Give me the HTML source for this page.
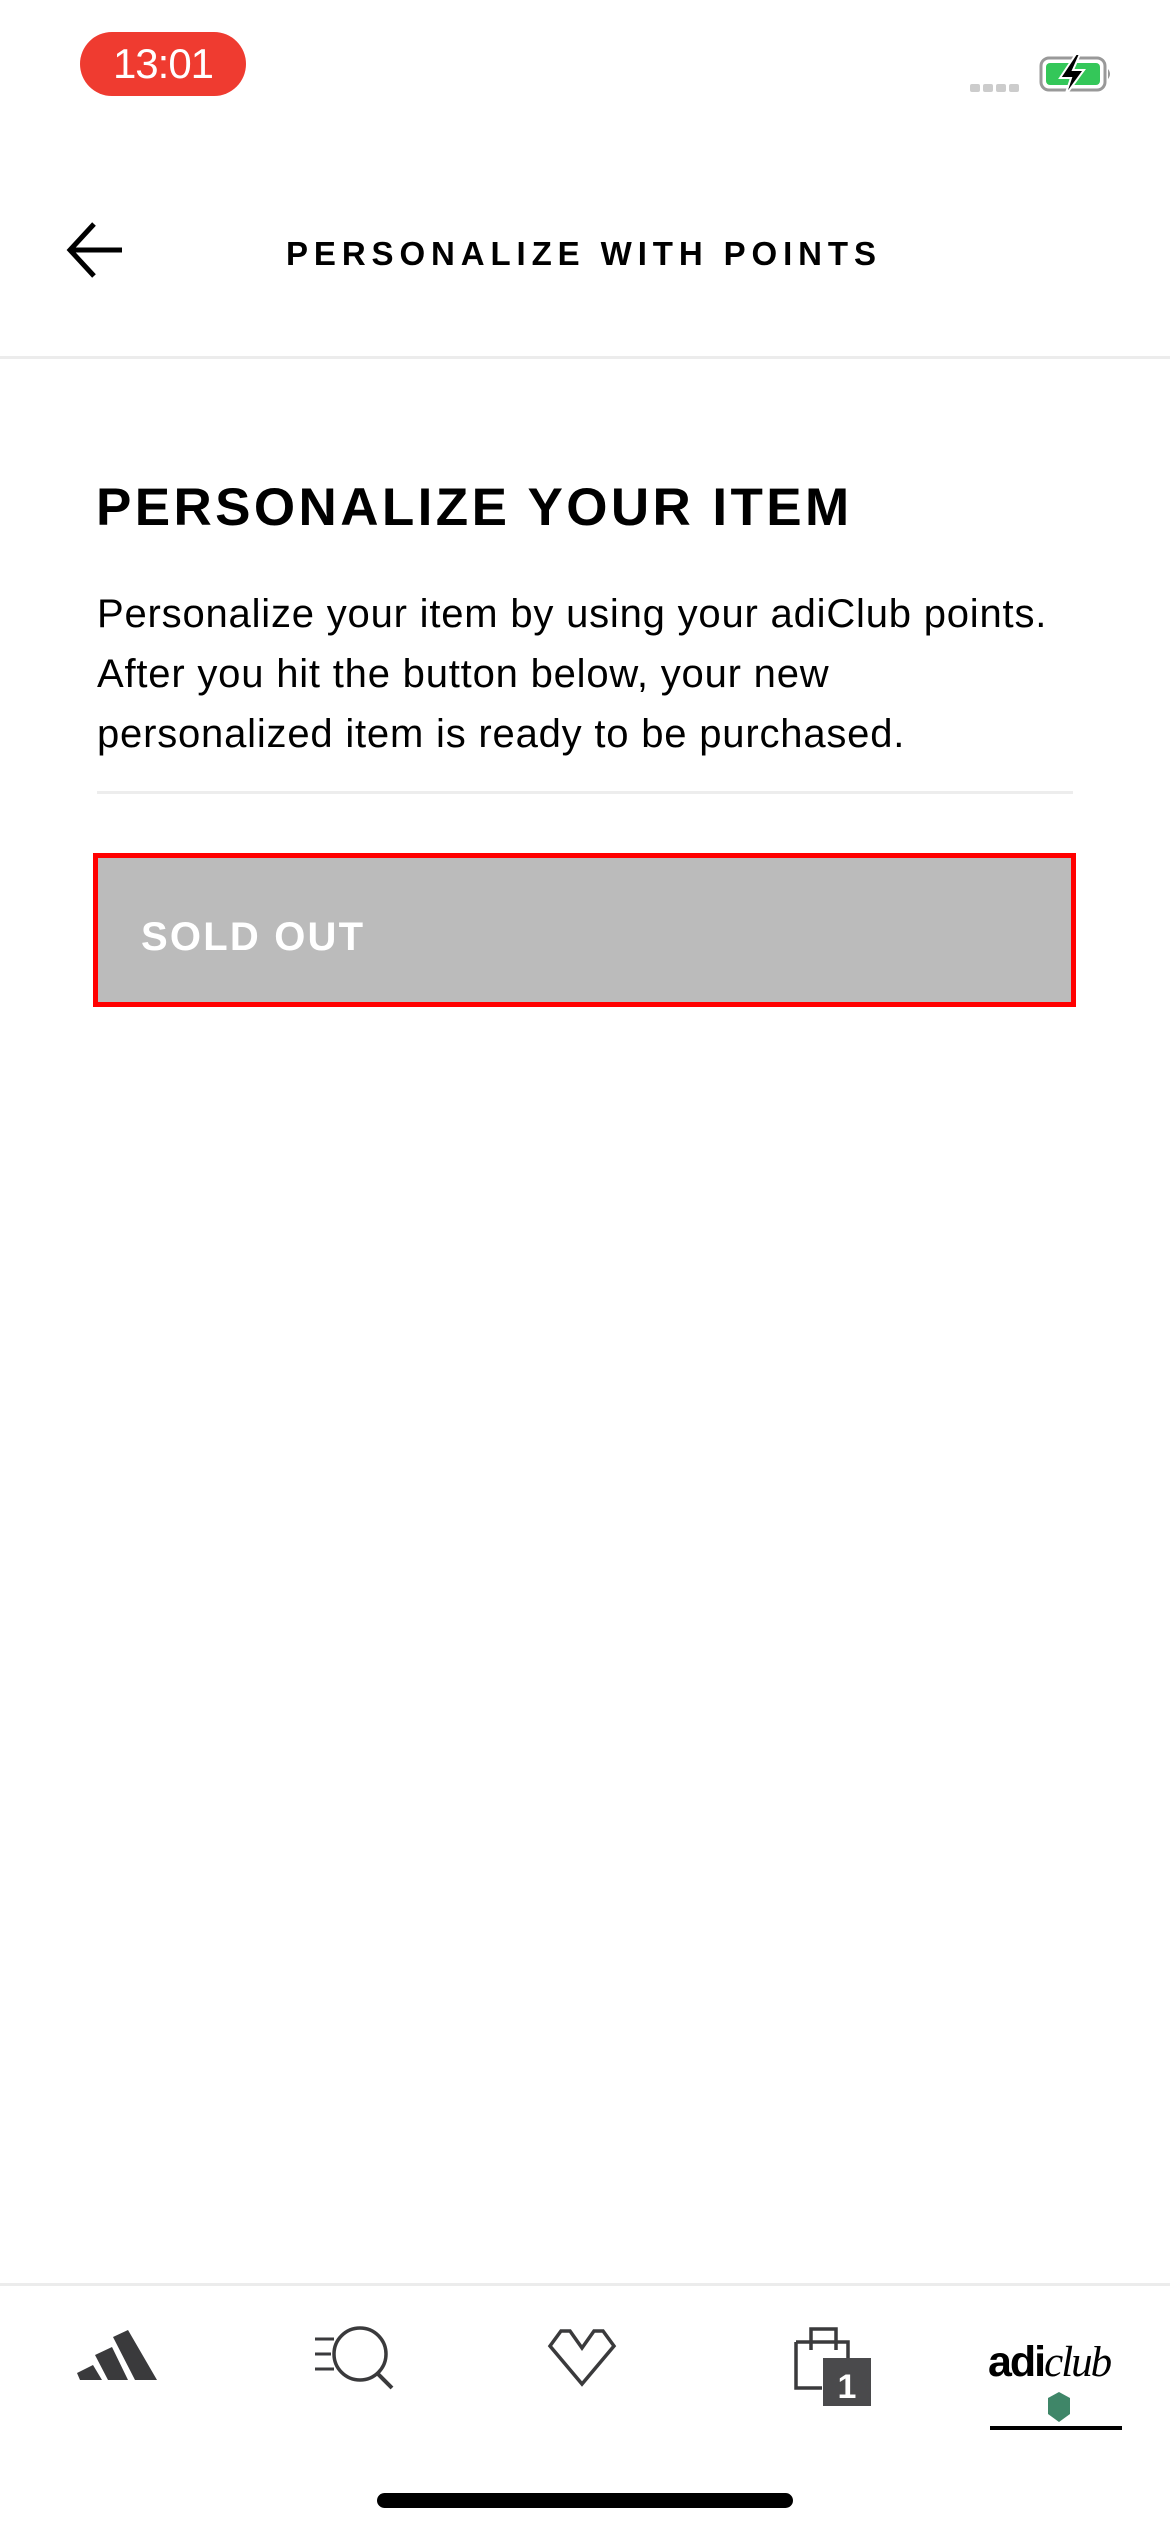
<!DOCTYPE html>
<html><head><meta charset="utf-8"><style>
*{margin:0;padding:0;box-sizing:border-box}
body{width:1170px;height:2532px;background:#fff;position:relative;overflow:hidden;font-family:"Liberation Sans",sans-serif;color:#000}
.a{position:absolute}
</style></head><body>
<div class="a" style="left:80px;top:32px;width:166px;height:64px;border-radius:32px;background:#ef3b30;color:#fff;font-size:42px;line-height:64px;text-align:center;letter-spacing:-1px">13:01</div>
<div class="a" style="left:970px;top:84px;width:10px;height:8px;border-radius:2px;background:#ccc"></div>
<div class="a" style="left:983px;top:84px;width:10px;height:8px;border-radius:2px;background:#ccc"></div>
<div class="a" style="left:996px;top:84px;width:10px;height:8px;border-radius:2px;background:#ccc"></div>
<div class="a" style="left:1009px;top:84px;width:10px;height:8px;border-radius:2px;background:#ccc"></div>
<svg class="a" style="left:1038px;top:54px" width="80" height="42" viewBox="0 0 80 42">
<rect x="3" y="4" width="64" height="32" rx="8" fill="none" stroke="#999" stroke-width="3"/>
<rect x="8" y="9" width="54" height="22" rx="4" fill="#34c759"/>
<path d="M70 15 q4 5 0 10z" fill="#999"/>
<path d="M38 0 L22 24 L33 24 L27 42 L46 16 L35 16 L42 0Z" fill="#000" stroke="#fff" stroke-width="2"/>
</svg>
<svg class="a" style="left:66px;top:222px" width="60" height="56" viewBox="0 0 60 56">
<path d="M28 2 L4 28 L28 54 M4 28 H56" fill="none" stroke="#000" stroke-width="5"/>
</svg>
<div class="a" style="left:286px;top:234px;font-size:33px;font-weight:bold;letter-spacing:5.9px;line-height:40px;white-space:nowrap">PERSONALIZE WITH POINTS</div>
<div class="a" style="left:0;top:356px;width:1170px;height:3px;background:#ececec"></div>
<div class="a" style="left:96px;top:476px;font-size:53px;font-weight:bold;letter-spacing:3.4px;line-height:64px;white-space:nowrap">PERSONALIZE YOUR ITEM</div>
<div class="a" style="left:97px;top:584px;font-size:40px;letter-spacing:0.8px;line-height:60px;white-space:nowrap">Personalize your item by using your adiClub points.<br>After you hit the button below, your new<br>personalized item is ready to be purchased.</div>
<div class="a" style="left:97px;top:791px;width:976px;height:3px;background:#ededed"></div>
<div class="a" style="left:93px;top:853px;width:983px;height:154px;background:#bbb;border:5px solid #f00"></div>
<div class="a" style="left:141px;top:914px;font-size:40px;font-weight:bold;color:#fff;letter-spacing:2.2px;line-height:46px;white-space:nowrap">SOLD OUT</div>
<div class="a" style="left:0;top:2283px;width:1170px;height:3px;background:#ececec"></div>
<svg class="a" style="left:76px;top:2328px" width="84" height="54" viewBox="0 0 84 54">
<path d="M1 45 L17 37 L26 52 L4 52Z M19 27 L36 19 L52 52 L32 52Z M37 9 L52 2 L81 52 L59 52Z" fill="#3a3a3c"/>
</svg>
<svg class="a" style="left:312px;top:2324px" width="84" height="68" viewBox="0 0 84 68">
<path d="M3 15 H22 M3 30 H19 M3 45 H22" stroke="#3a3a3c" stroke-width="3"/>
<circle cx="48" cy="30" r="26" fill="none" stroke="#3a3a3c" stroke-width="3.5"/>
<path d="M66 50 L80 64" stroke="#3a3a3c" stroke-width="4"/>
</svg>
<svg class="a" style="left:546px;top:2328px" width="80" height="60" viewBox="0 0 80 60">
<path d="M4 18 L15 3 H24 L36 20 L48 3 H57 L68 18 L36 56Z" fill="none" stroke="#3a3a3c" stroke-width="3.5" stroke-linejoin="miter"/>
</svg>
<svg class="a" style="left:792px;top:2326px" width="84" height="84" viewBox="0 0 84 84">
<path d="M4 16 H56 V40 M4 16 V62 H30" fill="none" stroke="#3a3a3c" stroke-width="3.5"/>
<path d="M19 24 V3 H44 V24" fill="none" stroke="#3a3a3c" stroke-width="3.5"/>
<rect x="31" y="32" width="48" height="48" fill="#4a4a4c"/>
<text x="55" y="72" font-family="Liberation Sans" font-size="34" font-weight="bold" fill="#fff" text-anchor="middle">1</text>
</svg>
<div class="a" style="left:988px;top:2338px;font-size:43px;line-height:48px;white-space:nowrap;letter-spacing:-2px"><span style="font-weight:bold">adi</span><span style="font-family:'Liberation Serif',serif;font-style:italic">club</span></div>
<svg class="a" style="left:1047px;top:2392px" width="24" height="30" viewBox="0 0 24 30">
<path d="M12 0 L23 6 V22 L12 30 L1 22 V6Z" fill="#3f8668"/>
</svg>
<div class="a" style="left:990px;top:2426px;width:132px;height:4px;background:#000"></div>
<div class="a" style="left:377px;top:2493px;width:416px;height:15px;border-radius:8px;background:#000"></div>
</body></html>
